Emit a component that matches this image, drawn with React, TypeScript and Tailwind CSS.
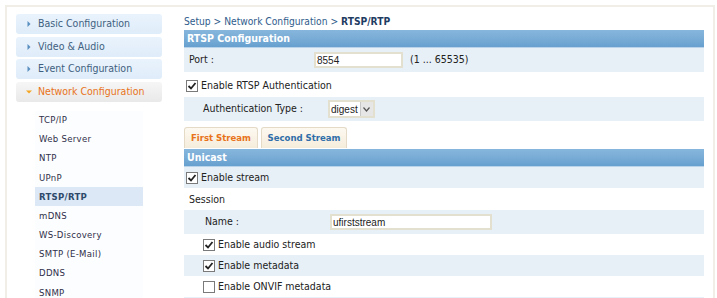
import { Fragment } from "react";

const FONT = { fontFamily: "'DejaVu Sans Condensed', 'DejaVu Sans', Verdana, sans-serif" };

const mainMenu = [
  { label: "Basic Configuration", open: false },
  { label: "Video & Audio", open: false },
  { label: "Event Configuration", open: false },
  { label: "Network Configuration", open: true },
];

const subMenu = [
  "TCP/IP",
  "Web Server",
  "NTP",
  "UPnP",
  "RTSP/RTP",
  "mDNS",
  "WS-Discovery",
  "SMTP (E-Mail)",
  "DDNS",
  "SNMP",
];

function Check({ on }: { on: boolean }) {
  return (
    <span className="w-[12px] h-[12px] border border-[#7a7a7a] bg-white flex items-center justify-center shrink-0">
      {on && (
        <svg width="10" height="10" viewBox="0 0 10 10">
          <path d="M1.5 5 L4 7.5 L8.5 2" fill="none" stroke="#222" strokeWidth="1.8" />
        </svg>
      )}
    </span>
  );
}

function Header({ title }: { title: string }) {
  return (
    <div className="h-[18px] flex items-center px-[3px] text-white font-bold text-[10.5px] bg-gradient-to-b from-[#86b6dc] via-[#79acd6] to-[#66a0cf] border-b border-[#b9d3ea]">
      {title}
    </div>
  );
}

function CheckRow({ label, on, indent, shade, h }: { label: string; on: boolean; indent?: boolean; shade?: boolean; h: string }) {
  return (
    <div className={`${h} flex items-center gap-[3px] ${indent ? "pl-[19px]" : "pl-[2px]"} ${shade ? "bg-[#e8f0f7]" : "bg-white"}`}>
      <Check on={on} />
      <span className="text-[10.5px] text-[#222]">{label}</span>
    </div>
  );
}

export default function App() {
  return (
    <div className="w-[717px] h-[298px] overflow-hidden bg-white pt-[5px] pl-[5px]" style={FONT}>
      <div className="w-[710px] h-[320px] border-2 border-[#f1eee8] flex pt-[7px] pl-[9px]">
        {/* Sidebar */}
        <div className="w-[146px] shrink-0">
          <div className="flex flex-col gap-[2.5px]">
            {mainMenu.map((m) => (
              <div
                key={m.label}
                className={`h-[20px] rounded-[3px] flex items-center pl-[10px] gap-[6px] text-[10.5px] ${
                  m.open
                    ? "bg-gradient-to-b from-[#f6f6f6] to-[#e9e9e9] text-[#e8731a]"
                    : "bg-gradient-to-b from-[#e9f3fd] to-[#dfecf9] text-[#3f5f80]"
                }`}
              >
                {m.open ? (
                  <svg width="6" height="6" viewBox="0 0 6 6">
                    <path d="M0 1.5 L6 1.5 L3 4.5 Z" fill="#f5a623" />
                  </svg>
                ) : (
                  <svg width="6" height="6" viewBox="0 0 6 6">
                    <path d="M1.5 0 L4.5 3 L1.5 6 Z" fill="#5a8fc0" />
                  </svg>
                )}
                <span>{m.label}</span>
              </div>
            ))}
          </div>
          <div className="ml-[19px] w-[108px] mt-[9px] bg-[#fcfdfe]">
            {subMenu.map((s) => (
              <div
                key={s}
                className={`h-[19.2px] flex items-center pl-[4px] text-[9.5px] tracking-[0.3px] ${
                  s === "RTSP/RTP" ? "bg-[#dce8f5] font-bold text-[#2e4a6b]" : "text-[#2f2f4a]"
                }`}
              >
                {s}
              </div>
            ))}
          </div>
        </div>

        {/* Content */}
        <div className="ml-[22px] w-[520px] shrink-0">
          <div className="h-[16px] flex items-center text-[10.2px] text-[#2f5c8c]">
            Setup &gt; Network Configuration &gt;&nbsp;<span className="font-bold text-[#1f3c63]">RTSP/RTP</span>
          </div>
          <Header title="RTSP Configuration" />
          <div className="h-[24px] flex items-center bg-[#e8f0f7] text-[10.5px] text-[#222]">
            <span className="pl-[5px] w-[130px]">Port :</span>
            <div className="w-[89px] h-[16px] border-2 border-[#e4e0d0] bg-white flex items-center pl-[1px] text-[10px]" style={{ fontFamily: "'Liberation Sans', Arial, sans-serif" }}>
              8554
            </div>
            <span className="ml-[7px]">(1 ... 65535)</span>
          </div>
          <CheckRow label="Enable RTSP Authentication" on h="h-[25px] pt-[3px]" />
          <div className="h-[24px] flex items-center bg-[#e8f0f7] text-[10.5px] text-[#222]">
            <span className="pl-[19px] w-[144px]">Authentication Type :</span>
            <div className="h-[18px] border-2 border-[#e4e0d0] bg-white flex items-center">
              <span className="pl-[1px] pr-[2px] text-[10px]" style={{ fontFamily: "'Liberation Sans', Arial, sans-serif" }}>digest</span>
              <span className="w-[13px] h-[14px] bg-[#e6e6e6] border-l border-[#c8c8c8] flex items-center justify-center">
                <svg width="7" height="5" viewBox="0 0 7 5">
                  <path d="M0.5 0.5 L3.5 4 L6.5 0.5" fill="none" stroke="#555" strokeWidth="1.2" />
                </svg>
              </span>
            </div>
          </div>
          <div className="h-[6px]" />
          <div className="h-[21px] flex items-end gap-[3px]">
            <div className="h-[21px] w-[74px] rounded-t-[3px] border border-b-0 border-[#e4dac6] bg-gradient-to-b from-[#fdf9f1] to-[#f5ecdb] flex items-center justify-center text-[9.5px] font-bold text-[#e8731a]">
              First Stream
            </div>
            <div className="h-[21px] w-[86px] rounded-t-[3px] border border-b-0 border-[#e4dac6] bg-gradient-to-b from-[#fdf9f1] to-[#f5ecdb] flex items-center justify-center text-[9.5px] font-bold text-[#2f6ea8]">
              Second Stream
            </div>
          </div>
          <div className="h-[1px]" />
          <Header title="Unicast" />
          <CheckRow label="Enable stream" on shade h="h-[21px]" />
          <div className="h-[22px] flex items-center pl-[5px] pt-[2px] text-[10.5px] text-[#222]">Session</div>
          <div className="h-[24px] flex items-center bg-[#e8f0f7] text-[10.5px] text-[#222]">
            <span className="pl-[21px] w-[146px]">Name :</span>
            <div className="w-[162px] h-[16px] border-2 border-[#e4e0d0] bg-white flex items-center pl-[1px] text-[10px]" style={{ fontFamily: "'Liberation Sans', Arial, sans-serif" }}>
              ufirststream
            </div>
          </div>
          {[
            { l: "Enable audio stream", on: true, shade: false },
            { l: "Enable metadata", on: true, shade: true },
            { l: "Enable ONVIF metadata", on: false, shade: false },
          ].map((r) => (
            <Fragment key={r.l}>
              <CheckRow label={r.l} on={r.on} indent shade={r.shade} h="h-[21px]" />
            </Fragment>
          ))}
          <div className="h-[21px] bg-[#e8f0f7]" />
        </div>
      </div>
    </div>
  );
}
